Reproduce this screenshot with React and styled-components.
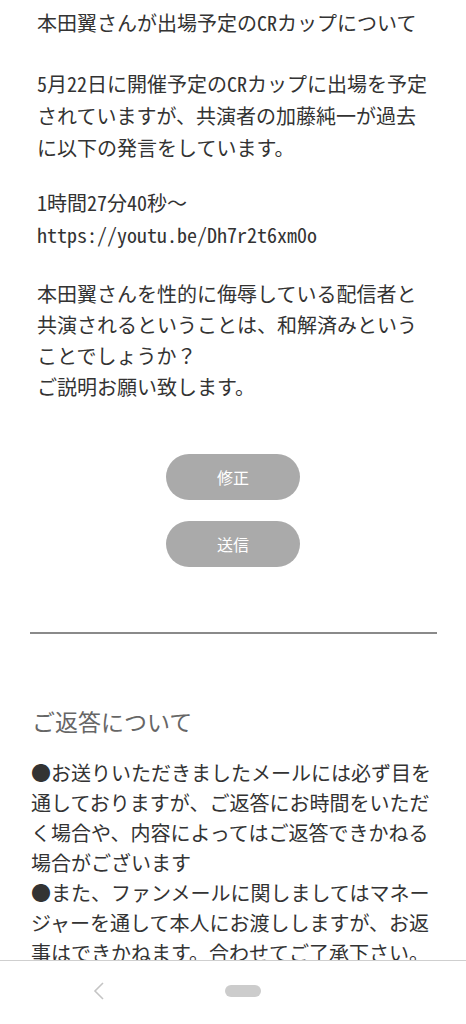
import React from "react";
import styled, { createGlobalStyle } from "styled-components";

const GlobalStyle = createGlobalStyle`
  html, body {
    margin: 0;
    padding: 0;
    background: #ffffff;
  }
  body {
    font-family: "Noto Sans CJK JP", "Noto Sans", sans-serif;
    color: #333333;
  }
`;

const Page = styled.div`
  width: 466px;
  display: flex;
  flex-direction: column;
  padding-bottom: 120px;
`;

const Message = styled.div`
  padding: 7px 0 0 37px;
  font-size: 20px;
  font-feature-settings: "hwid";
  color: #333333;
`;

/* full-width punctuation keeps its full width */
const Wide = styled.span`
  font-feature-settings: normal;
`;

const Para = styled.p`
  margin: 0 0 ${(p) => p.$gap || 26}px 0;
  line-height: ${(p) => p.$lh || 32}px;
  white-space: nowrap;
`;

const ButtonGroup = styled.div`
  display: flex;
  flex-direction: column;
  align-items: center;
  gap: 21px;
  margin-top: 26px;
`;

const PillButton = styled.button`
  width: 134px;
  height: 46px;
  border: none;
  border-radius: 23px;
  background: #aaaaaa;
  color: #ffffff;
  font-family: "Noto Sans CJK JP", sans-serif;
  font-size: 16px;
  padding: 0;
`;

const Divider = styled.hr`
  margin: 65px 29px 0 30px;
  border: none;
  height: 2px;
  background: #8a8a8a;
`;

const Reply = styled.section`
  padding: 70px 0 0 31px;
`;

const ReplyTitle = styled.h2`
  margin: 0 0 20px 1px;
  font-size: 23px;
  font-weight: 400;
  line-height: 34px;
  color: #666666;
`;

const ReplyText = styled.p`
  margin: 0;
  font-size: 20px;
  line-height: 30px;
  color: #333333;
  white-space: nowrap;
`;

const NavBar = styled.nav`
  position: fixed;
  left: 0;
  right: 0;
  bottom: 0;
  height: 63px;
  background: #ffffff;
  border-top: 1px solid #cfcfcf;
  display: flex;
  align-items: center;
`;

const BackIcon = styled.svg`
  margin-left: 92px;
  margin-top: -3px;
`;

const HomePill = styled.span`
  width: 36px;
  height: 12px;
  border-radius: 6px;
  background: #cccccc;
  margin-left: 119px;
  margin-top: -3px;
`;

export default function App() {
  return (
    <>
      <GlobalStyle />
      <Page>
        <Message>
          <Para $gap={29}>本田翼さんが出場予定のCRカップについて</Para>
          <Para $gap={23}>
            5月22日に開催予定のCRカップに出場を予定
            <br />
            されていますが、共演者の加藤純一が過去
            <br />
            に以下の発言をしています。
          </Para>
          <Para $gap={27}>
            1時間27分40秒<Wide>～</Wide>
            <br />
            https://youtu.be/Dh7r2t6xm0o
          </Para>
          <Para $lh={31}>
            本田翼さんを性的に侮辱している配信者と
            <br />
            共演されるということは、和解済みという
            <br />
            ことでしょうか<Wide>？</Wide>
            <br />
            ご説明お願い致します。
          </Para>
        </Message>

        <ButtonGroup>
          <PillButton>修正</PillButton>
          <PillButton>送信</PillButton>
        </ButtonGroup>

        <Divider />

        <Reply>
          <ReplyTitle>ご返答について</ReplyTitle>
          <ReplyText>
            ●お送りいただきましたメールには必ず目を
            <br />
            通しておりますが、ご返答にお時間をいただ
            <br />
            く場合や、内容によってはご返答できかねる
            <br />
            場合がございます
            <br />
            ●また、ファンメールに関しましてはマネー
            <br />
            ジャーを通して本人にお渡ししますが、お返
            <br />
            事はできかねます。合わせてご了承下さい。
          </ReplyText>
        </Reply>
      </Page>

      <NavBar>
        <BackIcon width="14" height="20" viewBox="0 0 14 20">
          <path d="M11 2 L3 10 L11 18" fill="none" stroke="#c4c4c4" strokeWidth="1.6" />
        </BackIcon>
        <HomePill />
      </NavBar>
    </>
  );
}
